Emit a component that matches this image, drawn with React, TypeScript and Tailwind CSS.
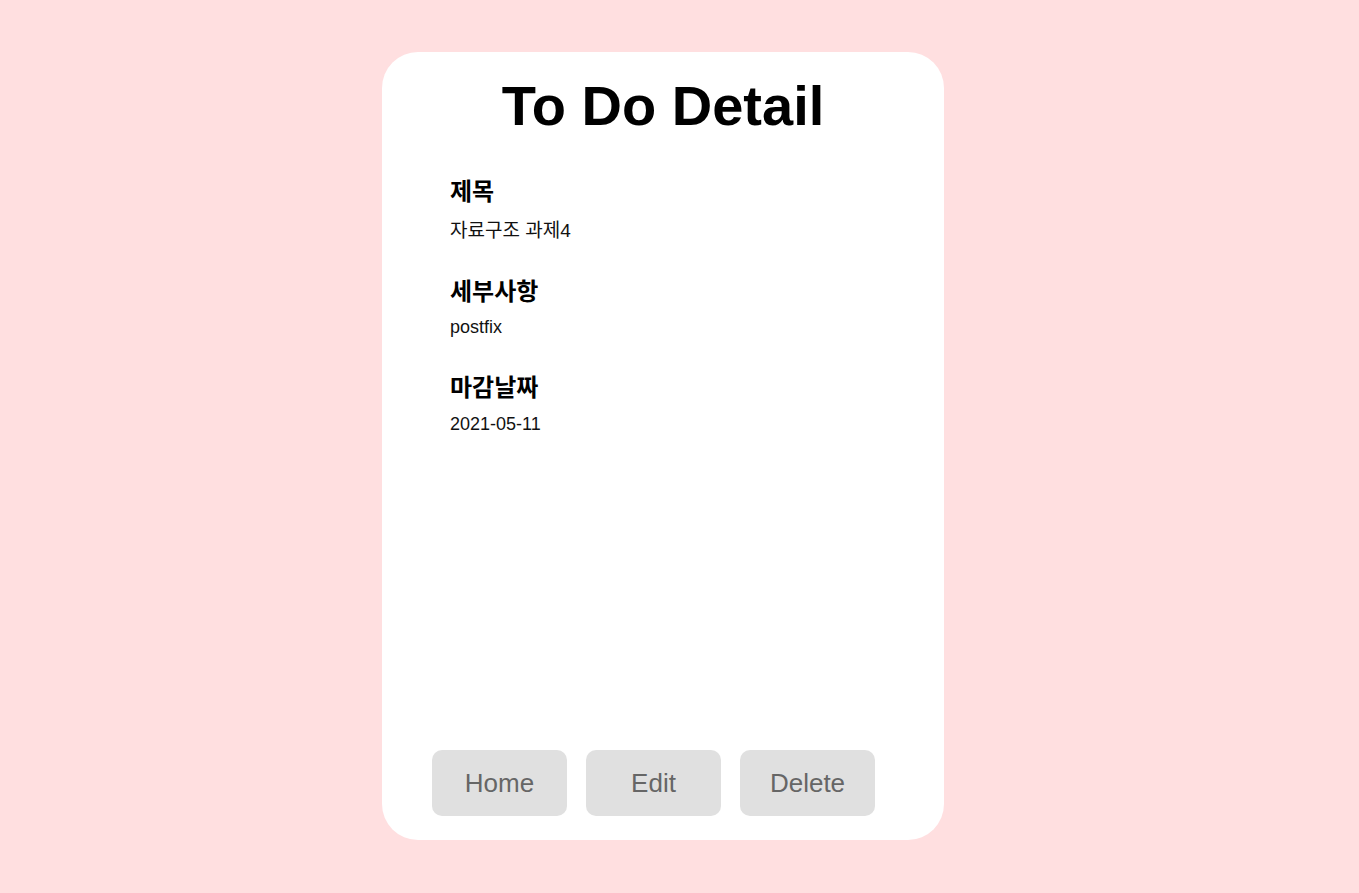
import React from "react";

const font = { fontFamily: '"Liberation Sans", "Noto Sans CJK KR", sans-serif' };

const Field: React.FC<{ label: string; value: string; className?: string; valueClass?: string }> = ({
  label,
  value,
  className = "",
  valueClass = "mt-[10px] text-[18px]",
}) => (
  <div className={"flex flex-col " + className}>
    <h3 className="text-[24px] leading-[28px] font-bold text-black">{label}</h3>
    <p className={"leading-[22px] text-[#111] " + valueClass}>{value}</p>
  </div>
);

const Button: React.FC<{ children: React.ReactNode }> = ({ children }) => (
  <button className="w-[135px] h-[66px] rounded-[10px] bg-[#e0e0e0] text-[26px] text-[#666]">
    {children}
  </button>
);

export default function App() {
  return (
    <div className="min-h-screen w-full bg-[#ffdfe0] pt-[52px] pb-[53px]" style={font}>
      <div className="ml-[382px] w-[562px] h-[788px] rounded-[36px] bg-white flex flex-col">
        <h1 className="mt-[22px] text-center text-[56px] leading-[64px] font-bold text-black">
          To Do Detail
        </h1>

        {/* fields */}
        <div className="mt-[40px] pl-[68px] flex flex-col">
          <Field label="제목" value="자료구조 과제4" valueClass="mt-[14px] text-[19px]" />
          <Field label="세부사항" value="postfix" className="mt-[36px]" />
          <Field
            label="마감날짜"
            value="2021-05-11"
            className="mt-[36px]"
            valueClass="mt-[11px] text-[18px]"
          />
        </div>

        <div className="mt-auto mb-[24px] pl-[50px] flex gap-[19px]">
          <Button>Home</Button>
          <Button>Edit</Button>
          <Button>Delete</Button>
        </div>
      </div>
    </div>
  );
}
